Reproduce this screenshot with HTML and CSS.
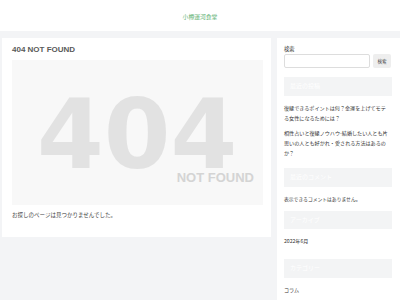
FILE: index.html
```html
<!DOCTYPE html>
<html lang="ja">
<head>
    <meta charset="UTF-8">
    <meta name="viewport" content="width=device-width, initial-scale=1.0">
    <title>ページが見つかりませんでした | 小樽運河食堂</title>
    <link rel="stylesheet" href="styles.css">
</head>
<body>
    <header class="site-header">
        <a class="site-name" href="#">小樽運河食堂</a>
    </header>
    <div class="container">
        <main class="content">
            <h1 class="entry-title">404 NOT FOUND</h1>
            <div class="not-found-image">
                <span class="big-404">404</span>
                <span class="not-found-label">NOT FOUND</span>
            </div>
            <p class="not-found-message">お探しのページは見つかりませんでした。</p>
        </main>
        <aside class="sidebar">
            <div class="widget search-widget">
                <label class="search-label">検索</label>
                <form class="search-form">
                    <input class="search-input" type="text">
                    <button class="search-button" type="button">検索</button>
                </form>
            </div>
            <div class="widget recent-posts">
                <h3 class="widget-title">最近の投稿</h3>
                <ul class="widget-list">
                    <li>復縁できるポイントは何？金運を上げてモテる女性になるためには？</li>
                    <li>相性占いと復縁ノウハウ-結婚したい人とも片思いの人とも好かれ・愛される方法はあるのか？</li>
                </ul>
            </div>
            <div class="widget">
                <h3 class="widget-title">最近のコメント</h3>
                <p class="widget-text no-comments">表示できるコメントはありません。</p>
            </div>
            <div class="widget archives">
                <h3 class="widget-title">アーカイブ</h3>
                <ul class="widget-list">
                    <li>2022年6月</li>
                </ul>
            </div>
            <div class="widget">
                <h3 class="widget-title">カテゴリー</h3>
                <ul class="widget-list">
                    <li>コラム</li>
                </ul>
            </div>
        </aside>
    </div>
</body>
</html>
```

FILE: styles.css
```css
body {
    margin: 0;
    background-color: #f3f4f6;
    font-family: "Noto Sans CJK JP", sans-serif;
    color: #333;
    overflow: hidden;
}
.site-header {
    height: 31px;
    background-color: white;
    display: flex;
    align-items: center;
    justify-content: center;
}
.site-name {
    font-size: 5.8px;
    color: #62b274;
    text-decoration: none;
    margin-top: 1px;
}
.container {
    display: flex;
    gap: 6px;
    padding: 7px 0 0 2px;
    align-items: flex-start;
}
.content {
    width: 269px;
    flex-shrink: 0;
    background-color: white;
    padding: 6px 8px 17px 10px;
    box-sizing: border-box;
}
.entry-title {
    margin: 0 0 5px;
    font-family: "Liberation Sans", Arial, sans-serif;
    font-size: 8px;
    font-weight: bold;
    color: #5a5a5a;
    line-height: 11px;
}
.not-found-image {
    position: relative;
    width: 251px;
    height: 145px;
    background-color: #f8f8f8;
}
.big-404 {
    position: absolute;
    left: 25px;
    top: 40px;
    font-family: "DejaVu Sans", sans-serif;
    font-size: 96px;
    font-weight: bold;
    color: #e2e2e2;
    line-height: 70px;
}
.not-found-label {
    position: absolute;
    right: 9px;
    top: 111px;
    font-family: "Liberation Sans", Arial, sans-serif;
    font-size: 13px;
    font-weight: bold;
    color: #d4d4d4;
    line-height: 13px;
}
.not-found-message {
    margin: 5px 0 0;
    font-size: 5.5px;
    line-height: 10px;
    color: #444;
}
.sidebar {
    width: 123px;
    flex-shrink: 0;
    background-color: white;
    padding: 7px 8px 10px 7px;
    box-sizing: border-box;
    min-height: 270px;
}
.widget + .widget {
    margin-top: 7px;
}
.search-widget {
    padding-bottom: 2px;
}
.recent-posts {
    padding-bottom: 3px;
}
.recent-posts .widget-list {
    padding-right: 3px;
}
.archives {
    padding-bottom: 6px;
}
.search-label {
    display: block;
    font-size: 5.2px;
    line-height: 8px;
    margin-bottom: 1px;
}
.search-form {
    display: flex;
    gap: 3px;
    margin: 0;
}
.search-input {
    width: 86px;
    height: 14px;
    box-sizing: border-box;
    border: 1px solid #ddd;
    border-radius: 2px;
    padding: 0;
}
.search-button {
    width: 18px;
    height: 14px;
    padding: 0;
    border: none;
    border-radius: 2px;
    background-color: #eee;
    font-family: inherit;
    font-size: 4.5px;
    color: #444;
}
.widget-title {
    margin: 0 0 7px;
    height: 18.5px;
    line-height: 18.5px;
    padding-left: 6px;
    background-color: #f3f4f5;
    color: white;
    font-size: 6px;
    font-weight: normal;
}
.widget-list {
    list-style: none;
    margin: 0;
    padding: 0;
}
.widget-list li {
    font-size: 5.1px;
    line-height: 10px;
}
.widget-list li + li {
    margin-top: 5.5px;
}
.widget-text {
    margin: 0;
    font-size: 5.1px;
    line-height: 10px;
}
.no-comments {
    font-size: 4.8px;
}
```
